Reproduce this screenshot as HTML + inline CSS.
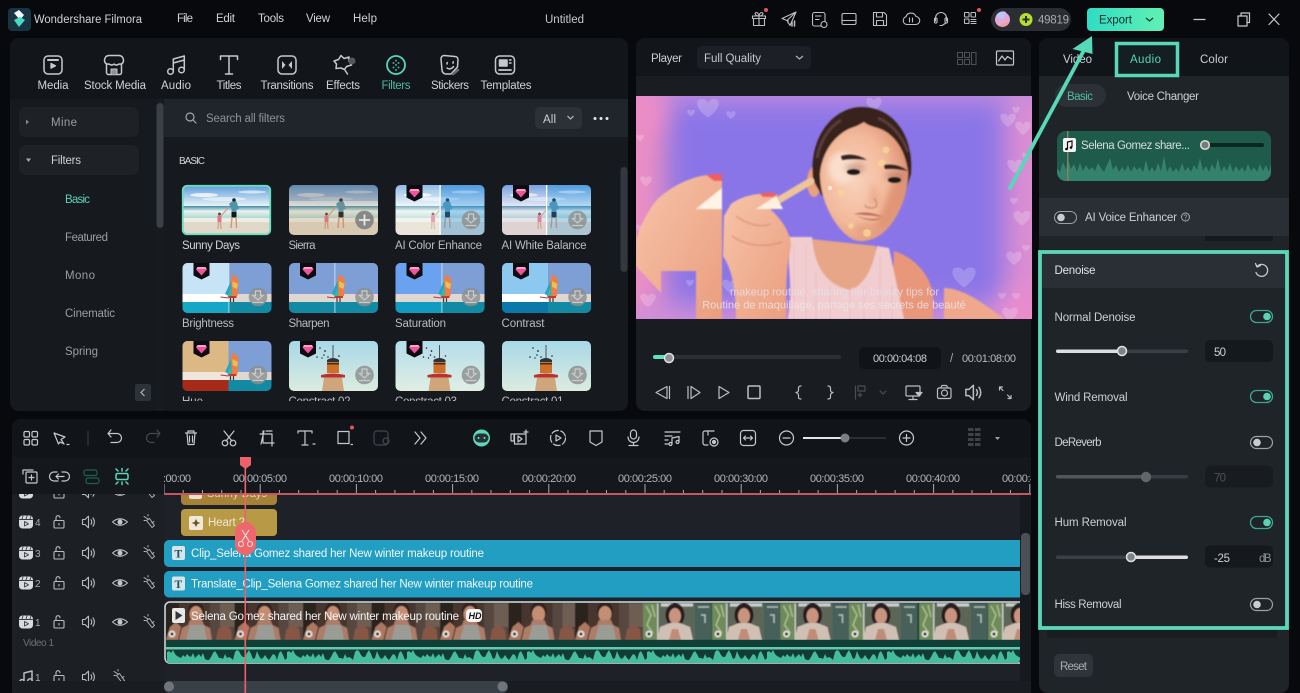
<!DOCTYPE html>
<html lang="en"><head><meta charset="utf-8"><title>Wondershare Filmora</title>
<style>
html,body{margin:0;padding:0;background:#08090c;width:1300px;height:693px;overflow:hidden}
svg{display:block;filter:blur(.3px)}
text{font-family:"Liberation Sans",sans-serif;font-size:11.5px;fill:#d0d3d6}
.ic{fill:none;stroke:#c6c9cc;stroke-width:1.300;stroke-linecap:round;stroke-linejoin:round}
.d{fill:#8d9196}.m{fill:#a9adb1}.l{fill:#cdd0d3}.g{fill:#59d3b4}
</style></head><body>
<svg width="1300" height="693" viewBox="0 0 1300 693" xmlns="http://www.w3.org/2000/svg">
<defs>
<filter id="b1"><feGaussianBlur stdDeviation=".5"/></filter>
<filter id="b07" x="-5%" y="-5%" width="110%" height="110%"><feGaussianBlur stdDeviation=".8"/></filter>
<filter id="b3" x="-30%" y="-30%" width="160%" height="160%"><feGaussianBlur stdDeviation="3"/></filter>
<filter id="b14" x="-100%" y="-100%" width="300%" height="300%"><feGaussianBlur stdDeviation="13"/></filter>
<linearGradient id="exp" x1="0" x2="1" y1="0" y2="0"><stop offset="0" stop-color="#2fdcc4"/><stop offset="1" stop-color="#62f0b4"/></linearGradient>
<linearGradient id="sky" x1="0" x2="0" y1="0" y2="1"><stop offset="0" stop-color="#5c9cdc"/><stop offset="1" stop-color="#e8f2f6"/></linearGradient>
<linearGradient id="sea" x1="0" x2="0" y1="0" y2="1"><stop offset="0" stop-color="#3f8ba5"/><stop offset=".4" stop-color="#e8f3f0"/><stop offset="1" stop-color="#a6d4cc"/></linearGradient>
<linearGradient id="sky2" x1="0" x2="0" y1="0" y2="1"><stop offset="0" stop-color="#a8d8e8"/><stop offset="1" stop-color="#dcecdf"/></linearGradient>
<radialGradient id="face" cx=".4" cy=".48" r=".62"><stop offset="0" stop-color="#f8d2bc"/><stop offset=".6" stop-color="#f3b99b"/><stop offset="1" stop-color="#dc8f70"/></radialGradient>
<linearGradient id="skin" x1="0" x2="1" y1="0" y2="1"><stop offset="0" stop-color="#f7c4a8"/><stop offset="1" stop-color="#ea9d7e"/></linearGradient>
<clipPath id="tc"><rect width="89" height="50" rx="5"/></clipPath>
<clipPath id="vc"><rect width="396" height="223"/></clipPath>
<clipPath id="fc"><rect width="68.5" height="37"/></clipPath>
<clipPath id="lpc"><rect x="10" y="38" width="618" height="373" rx="9"/></clipPath>
<clipPath id="gridc"><rect x="164" y="137" width="456" height="264"/></clipPath>
<clipPath id="tlc"><rect x="164" y="495" width="856" height="198"/></clipPath>
<clipPath id="lhc"><rect x="12" y="494" width="152" height="187"/></clipPath>
<clipPath id="rulc"><rect x="164" y="457" width="867" height="38.5"/></clipPath>
<clipPath id="clipm"><rect x="166" y="603" width="854" height="60" rx="4"/></clipPath>
<clipPath id="apw"><rect x="1057" y="131" width="214" height="50" rx="9"/></clipPath>

<path id="heart" d="M0 3.5C-5 0-4.500-3.200-2.200-3.200-1-3.200-.3-2.400 0-1.800.3-2.400 1-3.200 2.200-3.200 4.500-3.200 5 0 0 3.500Z" fill="#fff" opacity=".2"/>

<g id="tspk"><path d="M-6.500-2.500H-4L-.5-5.800V5.800L-4 2.500H-6.500Z"/><path d="M2-2.300Q3.500 0 2 2.300M4-4.200Q6.800 0 4 4.200"/></g>
<g id="tlock"><rect x="-5" y="-1.500" width="10" height="7.500" rx="1"/><path d="M-3-1.500V-4.300A2 2 0 0 1 1-4.300M0 1.500V3"/></g>
<g id="teye"><path d="M-7.500 0Q0-6.500 7.500 0 0 6.500-7.500 0Z"/><circle r="2.500" fill="#c6c9cc" stroke="none"/></g>
<g id="tmute"><path d="M-6-5.500-2-3M-3.500-1.500 2 5.500 4.500 3.500-.5-3.500ZM-6-1.500H-4.500M-2-7.500V-6M2 1 4 -.5" stroke-width=".9"/></g>
<g id="tfilm"><rect x="-7" y="-6.500" width="14" height="13" rx="3.500" fill="#d8dbdd" stroke="none"/><path d="M-6.500-2.500H6.500M-3-6-4-3M1-6 0-3M5-6 4-3M-1.500-.5V4L2.500 1.800Z" stroke="#3a3e42" stroke-width=".9" fill="none"/></g>
<g id="dl"><circle r="9.300" fill="#8b8f8f" opacity=".82"/><path d="M-2.500-6H2.500V-1.500H5L0 3-5-1.500H-2.500ZM-5.500 5.500H5.500" fill="none" stroke="#c9cccc" stroke-width="1.200"/></g>
<g id="gem"><path d="M11 0H27V12.500L19 16.500 11 12.500Z" fill="#0c0c10"/><path d="M15 4H23L24.500 6.500 19 12.500 13.500 6.500Z" fill="#f0549c"/><path d="M15 4H23L24 6H14Z" fill="#f9a1c9"/></g>

<g id="beach"><rect width="89" height="21" fill="url(#sky)"/><ellipse cx="22" cy="10" rx="14" ry="2" fill="#fff" opacity=".75"/><ellipse cx="70" cy="7" rx="14" ry="1.500" fill="#fff" opacity=".6"/><ellipse cx="42" cy="14" rx="22" ry="2" fill="#fff" opacity=".5"/><rect y="21" width="89" height="13" fill="url(#sea)"/><rect y="33" width="89" height="17" fill="#e0d9c9"/><rect y="33" width="89" height="4" fill="#eef3ec" opacity=".8"/>
<circle cx="52" cy="15" r="1.800" fill="#20201f"/><path d="M47 19 50 16.500H54.500L57 24 54.500 24.500V28H49.500V24Z" fill="#4f93ad"/><path d="M49.500 27H54.500V32.500H49.500Z" fill="#14171a"/><path d="M50 32 49 43M54 32 54.500 43" stroke="#d39a7a" stroke-width="1.500"/><circle cx="37.500" cy="29" r="1.400" fill="#5a3a2a"/><path d="M35.500 30.500H39.500V37H35.500Z" fill="#e0748c"/><path d="M36.500 37 36 44M38.500 37 39 44" stroke="#d39a7a" stroke-width="1.200"/><path d="M39 31 47 22" stroke="#d39a7a" stroke-width="1"/></g>

<g id="sailb"><path d="M50 11 56 16 55 33H45Z" fill="#ec7f44"/><path d="M42.500 31 48.500 18 49.500 34Z" fill="#25a7c2"/><path d="M50 18 55.500 21 54.500 26 50 24Z" fill="#e8c056"/><path d="M48 25 50 34H45Z" fill="#3cb6a8"/><path d="M46 33H54V35H46Z" fill="#c23a33"/><path d="M48 35V39M51 35V39" stroke="#5c2f25" stroke-width="1.200"/><path d="M38 34 46 35" stroke="#b7343a"/></g>
<g id="sail"><rect width="89" height="31" fill="#7e9fd6"/><rect y="31" width="89" height="8" fill="#e0d8d0"/><rect y="39" width="89" height="11" fill="#138aa4"/></g>

<g id="tower"><rect width="89" height="50" fill="url(#sky2)"/></g>
<g id="towerb"><path d="M43.500 4V17H44.500V4Z" fill="#48555a"/><path d="M38 19Q44 15 50 19V22H38Z" fill="#2f3338"/><rect x="38" y="21" width="12" height="11" fill="#cf6f28"/><rect x="38" y="22" width="12" height="1.500" fill="#333"/><path d="M32 34Q44 31 56 34V36.500H32Z" fill="#b8322f"/><path d="M35 36.500H53L55 50H33Z" fill="#cfa67c"/><g fill="#1d2528"><circle cx="31" cy="7" r=".8"/><circle cx="35" cy="14" r=".8"/><circle cx="28" cy="16" r=".8"/><circle cx="36" cy="10" r=".9"/><circle cx="39" cy="16" r=".8"/><circle cx="50" cy="15" r=".8"/><circle cx="33" cy="17" r=".7"/></g></g>

<g id="wave"><path d="M0 14V3L2 2 4 4 6 1 8 5 10 7 12 8 14 9 16 6 18 8 20 5 22 7 24 8 26 4 28 9 30 7 32 5 34 8 36 4 38 10 40 11H42L44 8 46 4 48 2 50 5 52 9H54L56 10 58 5 60 9 62 8 64 9 66 11 68 3 70 1 72 2 74 6 76 8H78L80 4 82 1 84 5 86 10 88 9 90 2 92 7 94 10 96 9 98 6 100 9 102 11 104 8 106 5 108 6 110 11 112 4 114 2 116 6 118 11 120 9V14Z" fill="#44bd9b"/></g>

<g id="f1"><g clip-path="url(#fc)"><rect width="68.500" height="37" fill="#46342e"/><rect width="13" height="37" fill="#2a211f"/><rect x="44" width="24.500" height="37" fill="#574640"/><rect x="54" width="14.500" height="24" fill="#6d5d52"/><ellipse cx="30" cy="8" rx="8" ry="9" fill="#32201b"/><ellipse cx="30" cy="11" rx="6.500" ry="8" fill="#c48e74"/><path d="M24 17H36L38 22 44 25 46 37H13L16 25 22 22Z" fill="#ac7d68"/><path d="M24 22H38L41 37H20Z" fill="#9c9c96"/><path d="M0 37 4 24 10 19 15 24 12 37Z" fill="#ad7862"/><path d="M50 37 52 26 58 22 65 26 66 37Z" fill="#875644"/><circle cx="6" cy="31" r="3.500" fill="#e9e9e6" opacity=".9"/><circle cx="6" cy="31" r="1.500" fill="#222"/></g></g>
<g id="f2"><g clip-path="url(#fc)"><rect width="68.500" height="37" fill="#5c6658"/><rect width="14" height="37" fill="#6f8a5c"/><path d="M3 3 8 12 4 22 10 30M9 2 12 14" stroke="#a8c08c" stroke-width="1.500" fill="none"/><rect x="14" width="1.500" height="37" fill="#c4c9c2"/><rect x="52" width="16.500" height="37" fill="#46605a"/><path d="M55 4H66M58 12H62V20" stroke="#aebeb6" stroke-width="1.500" fill="none"/><rect x="18" width="32" height="3.500" fill="#c8ccc8"/><ellipse cx="32" cy="12" rx="9.500" ry="12" fill="#2b1c1a"/><ellipse cx="32" cy="13" rx="6" ry="8" fill="#c89480"/><path d="M14 37 17 24 27 20H37L47 24 50 37Z" fill="#d0c0b4"/><path d="M26 37 29 26H35L38 37Z" fill="#c08c78"/><circle cx="6" cy="31" r="3.500" fill="#e9e9e6" opacity=".9"/><circle cx="6" cy="31" r="1.500" fill="#222"/></g></g>
</defs>

<rect width="1300" height="693" fill="#08090c"/>

<!-- TITLE BAR -->
<rect x="8" y="8" width="23" height="23" rx="4" fill="#183443"/>
<path d="M14 13 19 10 24 15 20 20Z" fill="#f4f7f7"/><path d="M14 20 20 17 25 20 19 27Z" fill="#43dcc0"/>
<text x="34" y="23" textLength="108" lengthAdjust="spacingAndGlyphs">Wondershare Filmora</text>
<text x="177" y="22" textLength="16">File</text><text x="216" y="22" textLength="19">Edit</text><text x="258" y="22" textLength="26">Tools</text><text x="306" y="22" textLength="24">View</text><text x="353" y="22" textLength="24">Help</text>
<text x="545" y="23" textLength="39" style="fill:#c6c9cc">Untitled</text>

<g class="ic" style="stroke-width:1.100;stroke:#bcbfc2">
<g transform="translate(759,19)"><path d="M-6.500-3H6.500V-.5H-6.500ZM-5.500-.5V6.500H5.500V-.5M0-3V6.500M0-3C-4-3-5-6.500-2.500-6.500-1-6.500 0-4 0-3 0-4 1-6.500 2.500-6.500 5-6.500 4-3 0-3Z"/></g>
<g transform="translate(789,19)"><path d="M7-7-7-.500-2 1.500 1 6.500ZM-2 1.500 7-7M-1 4V1.500"/><path d="M3 3V7M5.500 2V7" stroke-width="1.500"/></g>
<g transform="translate(819,19)"><rect x="-6.500" y="-6.500" width="12.500" height="13.500" rx="2"/><path d="M-3.500-3H2M-3.500.5H0"/><circle cx="5" cy="5.500" r="3" fill="#08090c"/></g>
<g transform="translate(849,19)"><rect x="-7" y="-5.500" width="14" height="11" rx="1.500"/><path d="M-7 1.500H7"/></g>
<g transform="translate(880,19)"><path d="M-6.500-6.500H4L6.500-4V6.500H-6.500ZM-3.500-6.500V-2H2.500V-6.500M-3.500 6.500V1.500H3.500V6.500"/></g>
<g transform="translate(911,19)"><path d="M-4 5.500A4 4 0 0 1-5-2.300 5.300 5.300 0 0 1 5-2.500 4 4 0 0 1 4.500 5.500ZM-1.500-1V3M1.500-1V3"/></g>
<g transform="translate(941,19)"><path d="M-5.500 2V-1A5.500 5.500 0 0 1 5.500-1V2"/><rect x="-6.500" y="-1" width="2.500" height="5" rx="1"/><rect x="4" y="-1" width="2.500" height="5" rx="1"/><path d="M5 4 1 6.500H-1"/></g>
<g transform="translate(970,19)"><rect x="-5.500" y="-6.500" width="4.500" height="4.500" rx=".5"/><rect x="1" y="-6.500" width="4.500" height="4.500" rx=".5"/><rect x="-5.500" y="0" width="4.500" height="4.500" rx=".5"/><path d="M1 .5H6M1 2.500H6M1 4.500H6"/></g>
</g>
<circle cx="766" cy="10" r="2" fill="#e2555d"/><circle cx="979" cy="10" r="2" fill="#e2555d"/>

<rect x="991" y="8" width="80" height="23" rx="11.500" fill="#2a2e33"/>
<circle cx="1002.500" cy="19.500" r="7.500" fill="#e8a6d8"/><path d="M996 16a7.500 7.500 0 0 1 10-4l-3 8z" fill="#b9c6f6"/><path d="M999 25.500a7.500 7.500 0 0 0 10-4z" fill="#f2a082"/>
<circle cx="1026" cy="19.500" r="6.500" fill="#b9dc32"/><path d="M1026 16V23M1022.500 19.500H1029.500" stroke="#263314" stroke-width="2"/>
<text x="1038" y="23.500" textLength="31" class="m">49819</text>

<rect x="1087" y="8" width="77" height="23" rx="4" fill="url(#exp)"/>
<text x="1099" y="23.500" textLength="33" style="fill:#0f2a2a">Export</text>
<path d="M1146 18 1149.500 21 1153 18" fill="none" stroke="#103030" stroke-width="1.200"/>
<g class="ic" style="stroke-width:1.200"><path d="M1194 19.500H1205"/><rect x="1238" y="16" width="9" height="10"/><path d="M1241 16V13H1249.500V22.500H1247"/><path d="M1269 14 1279 24.500M1279 14 1269 24.500"/></g>

<!-- LEFT PANEL -->
<g clip-path="url(#lpc)">
<rect x="10" y="38" width="618" height="373" fill="#16191e"/>
<rect x="10" y="38" width="618" height="61" fill="#12161a"/>
<rect x="164" y="99" width="464" height="38" fill="#20252c"/>
<rect x="156" y="99" width="8" height="312" fill="#181b20"/>
<rect x="156.500" y="103" width="7" height="125" rx="3.500" fill="#3b4046"/>
<rect x="620.500" y="167" width="7" height="105" rx="3.500" fill="#33383e"/>
</g>

<g class="ic">
<g transform="translate(53,65)"><rect x="-9" y="-9" width="18" height="18" rx="4" stroke-width="1.500"/><path d="M-5-5H5" stroke-width="2"/><path d="M-2-1.500 2.500.8-2 3.200Z" fill="#c6c9cc"/></g>
<g transform="translate(114,65)" stroke-width="1.500"><path d="M-5-9.500H5C8-9.500 9.500-7 9.500-4.500 9.500-1.500 7-.5 5-1 3 .5 1.500 .5 0-1-1.500 .5-3 .5-5-1-7-.5-9.500-1.500-9.500-4.500-9.500-7-8-9.500-5-9.500ZM-7.500-1V7.500A2 2 0 0 0-5.500 9.500H5.500A2 2 0 0 0 7.500 7.500V-1"/><path d="M-3 9.500V4H3V9.500" fill="#8e9296" stroke-width="1"/></g>
<g transform="translate(176,65)" stroke-width="1.500"><circle cx="-5.500" cy="6.500" r="2.800"/><circle cx="5.500" cy="5" r="2.800"/><path d="M-2.700 6.500V-6L8.300-9V5M-2.700-2 8.300-5"/></g>
<g transform="translate(229,65)" stroke-width="1.500"><path d="M-8.500-5.500V-9H8.500V-5.500M0-9V9M-3.500 9H3.500"/></g>
<g transform="translate(287,65)"><rect x="-9" y="-9" width="18" height="18" rx="4" stroke-width="1.500"/><path d="M-5-4-1.500 0-5 4ZM5-4 1.500 0 5 4Z" fill="#c6c9cc" stroke="none"/></g>
<g transform="translate(343,65)" stroke-width="1.500"><path d="M-2-9.500 1-6.500 6-8 6-3.500 8.500 0 3.500 1.500 1.500 4.500-2 3-7 3.500-6.500-1-9-4-4.500-5.500ZM1.500 4.500 4.500 9"/><circle cx="9" cy="-4" r="3.500" fill="#53575b" stroke="none"/></g>
<g transform="translate(396,65)" style="stroke:#58d6b6"><circle r="9" stroke-width="1.800" fill="none"/><g fill="#4ca892" stroke="none"><circle cy="-4.500" r="1"/><circle cx="-2.500" cy="-2" r="1"/><circle cx="2.500" cy="-2" r="1"/><circle r="1"/><circle cx="-2.500" cy="2.500" r="1"/><circle cx="2.500" cy="2.500" r="1"/><circle cy="5" r="1"/></g></g>
<g transform="translate(450,65)" stroke-width="1.500"><path d="M-6-9.500 5-8.500A3 3 0 0 1 8-5.500L7.500 2 1 9H-4A4 4 0 0 1-8 5L-9-6A3.200 3.200 0 0 1-6-9.500Z"/><path d="M-3-1-2.800-2.500M3-1.800 3.200-3.300M-3 3C-1.500 4.500 2 4 3.500 1.500"/><path d="M3 9 8 5" stroke="#6a6e72" stroke-width="2.500"/></g>
<g transform="translate(505,65)" stroke-width="1.500"><rect x="-9.500" y="-9" width="19" height="18" rx="4"/><path d="M-5.500-5H2V1H-5.500ZM4.500-5H6M4.500-2H6" fill="#c6c9cc"/><path d="M-6 5H6" stroke-width="1.800"/></g>
</g>
<text x="53" y="89" text-anchor="middle" textLength="31">Media</text>
<text x="115" y="89" text-anchor="middle" textLength="62">Stock Media</text>
<text x="176" y="89" text-anchor="middle" textLength="30">Audio</text>
<text x="229" y="89" text-anchor="middle" textLength="25">Titles</text>
<text x="287" y="89" text-anchor="middle" textLength="53">Transitions</text>
<text x="343" y="89" text-anchor="middle" textLength="34">Effects</text>
<text x="396" y="89" text-anchor="middle" textLength="29" style="fill:#58d6b6;opacity:.85">Filters</text>
<text x="450" y="89" text-anchor="middle" textLength="38">Stickers</text>
<text x="506" y="89" text-anchor="middle" textLength="51">Templates</text>

<!-- sidebar -->
<rect x="19" y="107" width="120" height="30" rx="7" fill="#1e2126"/>
<rect x="19" y="145" width="120" height="30" rx="7" fill="#1e2126"/>
<path d="M26 119.500 29 122 26 124.500Z" fill="#85898d"/><path d="M26 158.500H31L28.500 162Z" fill="#a5a9ad"/>
<text x="51" y="126" textLength="26" style="fill:#9a9ea2">Mine</text>
<text x="51" y="164" textLength="30" class="l">Filters</text>
<text x="65" y="203" textLength="25" style="fill:#5bd1b2">Basic</text>
<text x="65" y="241" textLength="43" style="fill:#9a9ea2">Featured</text><text x="65" y="279" textLength="30" style="fill:#9a9ea2">Mono</text><text x="65" y="317" textLength="50" style="fill:#9a9ea2">Cinematic</text><text x="65" y="355" textLength="33" style="fill:#9a9ea2">Spring</text>
<rect x="135" y="384" width="16" height="17" rx="2" fill="#2d3238"/><path d="M144.500 389 141 392.500 144.500 396" fill="none" stroke="#b0b4b8" stroke-width="1.200"/>

<!-- search -->
<g class="ic" style="stroke:#a3a7ab;stroke-width:1.200"><circle cx="190" cy="117" r="4"/><path d="M193 120 196 123"/></g>
<text x="206" y="122" textLength="79" style="fill:#8d9196">Search all filters</text>
<rect x="535" y="107" width="47" height="22" rx="5" fill="#2c3137"/>
<text x="543" y="123" textLength="13" class="l">All</text>
<path d="M567.500 116 570.500 119 573.500 116" fill="none" stroke="#c2c5c8" stroke-width="1.100"/>
<g fill="#e3e5e7"><circle cx="595" cy="118.500" r="1.500"/><circle cx="601" cy="118.500" r="1.500"/><circle cx="607" cy="118.500" r="1.500"/></g>
<text x="179" y="164" textLength="26" style="font-size:10px;fill:#d4d7d9">BASIC</text>

<!-- thumbs -->
<g clip-path="url(#gridc)">
<g transform="translate(182,185)"><g clip-path="url(#tc)"><use href="#beach"/></g><rect x=".75" y=".75" width="87.500" height="48.500" rx="4.500" fill="none" stroke="#66e0bf" stroke-width="1.800"/></g>
<g transform="translate(289,185)"><g clip-path="url(#tc)"><use href="#beach"/><rect width="89" height="50" fill="#b98a5c" opacity=".2"/><rect width="89" height="16" fill="#405a80" opacity=".25"/></g><circle cx="75.500" cy="35" r="9.300" fill="#7b7f7d" opacity=".88"/><path d="M70 35H81M75.500 29.500V40.500" stroke="#e8eaea" stroke-width="1.800"/></g>
<g transform="translate(395.500,185)"><g clip-path="url(#tc)"><use href="#beach"/><rect width="44" height="50" fill="#fff" opacity=".32"/><rect x="44" width="45" height="50" fill="#3d9be8" opacity=".38"/><rect x="44" width="1.300" height="50" fill="#fff"/></g><use href="#gem" x="0"/><use href="#dl" x="75.500" y="35"/></g>
<g transform="translate(502,185)"><g clip-path="url(#tc)"><use href="#beach"/><rect width="44" height="50" fill="#d8c0f0" opacity=".22"/><rect x="44" width="45" height="50" fill="#3d9be8" opacity=".3"/><rect x="44" width="1.300" height="50" fill="#fff"/></g><use href="#gem"/><use href="#dl" x="75.500" y="35"/></g>

<g transform="translate(182.500,263)"><g clip-path="url(#tc)"><use href="#sail"/><rect width="46" height="31" fill="#c6e4f6"/><rect y="31" width="46" height="8" fill="#fff"/><rect y="39" width="46" height="11" fill="#16a7c4"/><rect x="46" width=".8" height="50" fill="#cfe6f2"/><use href="#sailb"/></g><use href="#gem"/><use href="#dl" x="75.500" y="34"/></g>
<g transform="translate(289,263)"><g clip-path="url(#tc)"><use href="#sail"/><rect x="45.500" width=".8" height="50" fill="#d6eaf6"/><use href="#sailb"/></g><use href="#gem"/><use href="#dl" x="75.500" y="34"/></g>
<g transform="translate(395.500,263)"><g clip-path="url(#tc)"><use href="#sail"/><rect width="46" height="31" fill="#6aa2f0"/><rect y="39" width="46" height="11" fill="#0f9cc0"/><rect x="46" width=".8" height="50" fill="#cfe6f2"/><use href="#sailb"/></g><use href="#gem"/><use href="#dl" x="75.500" y="34"/></g>
<g transform="translate(502,263)"><g clip-path="url(#tc)"><use href="#sail"/><rect width="46" height="31" fill="#8cc8f0"/><rect y="31" width="46" height="8" fill="#fff"/><rect y="39" width="46" height="11" fill="#0a78a8"/><use href="#sailb"/></g><use href="#gem"/><use href="#dl" x="75.500" y="34"/></g>

<g transform="translate(182.500,341)"><g clip-path="url(#tc)"><use href="#sail"/><rect width="46" height="31" fill="#dcb984"/><rect y="31" width="46" height="8" fill="#eee5dc"/><rect y="39" width="46" height="11" fill="#a52a18"/><use href="#sailb"/></g><use href="#gem"/><use href="#dl" x="75.500" y="34"/></g>
<g transform="translate(289,341)"><g clip-path="url(#tc)"><use href="#tower"/><use href="#towerb"/></g><use href="#gem"/><use href="#dl" x="75.500" y="34"/></g>
<g transform="translate(395.500,341)"><g clip-path="url(#tc)"><use href="#tower"/><rect width="89" height="50" fill="#fff" opacity=".14"/><use href="#towerb"/></g><use href="#gem"/><use href="#dl" x="75.500" y="34"/></g>
<g transform="translate(502,341)"><g clip-path="url(#tc)"><use href="#tower"/><use href="#towerb"/></g><use href="#dl" x="75.500" y="34"/></g>

<text x="182" y="249" textLength="58">Sunny Days</text><text x="288.500" y="249" textLength="27" style="fill:#b9bcc0">Sierra</text><text x="395" y="249" textLength="87" style="fill:#b9bcc0">AI Color Enhance</text><text x="501.500" y="249" textLength="85" style="fill:#b9bcc0">AI White Balance</text>
<text x="182" y="327" textLength="52" style="fill:#b9bcc0">Brightness</text><text x="288.500" y="327" textLength="41" style="fill:#b9bcc0">Sharpen</text><text x="395" y="327" textLength="51" style="fill:#b9bcc0">Saturation</text><text x="501.500" y="327" textLength="43" style="fill:#b9bcc0">Contrast</text>
<text x="182" y="405" textLength="21" style="fill:#b9bcc0">Hue</text><text x="288.500" y="405" textLength="62" style="fill:#b9bcc0">Constract 02</text><text x="395" y="405" textLength="62" style="fill:#b9bcc0">Constract 03</text><text x="501.500" y="405" textLength="62" style="fill:#b9bcc0">Constract 01</text>
</g>

<!-- PLAYER -->
<rect x="636" y="38" width="395" height="373" rx="9" fill="#191c21"/>
<path d="M636 76V47a9 9 0 0 1 9-9H1022a9 9 0 0 1 9 9V76Z" fill="#12161b"/>
<text x="651" y="62" textLength="31" class="l">Player</text>
<rect x="697" y="46" width="114" height="23" rx="5" fill="#1c2026"/>
<text x="704" y="62" textLength="57" style="fill:#c4c7ca">Full Quality</text>
<path d="M796 56 799.500 59 803 56" fill="none" stroke="#b0b4b8" stroke-width="1.200"/>
<g fill="none" stroke="#4e5256" stroke-width="1"><rect x="957.500" y="52.500" width="5" height="5"/><rect x="964.500" y="52.500" width="5" height="5"/><rect x="957.500" y="59.500" width="5" height="5"/><rect x="964.500" y="59.500" width="5" height="5"/><path d="M971.500 52.500H976V64.500H971.500Z"/></g>
<g class="ic" style="stroke-width:1.200"><rect x="996.500" y="51" width="17" height="14" rx="1"/><path d="M998.500 61 1002 56 1005 60 1007.500 56.500 1011.500 59"/></g>

<!-- VIDEO -->
<g transform="translate(636,96)" clip-path="url(#vc)">
<rect width="396" height="223" fill="#8a75e8"/>
<rect x="-40" y="-20" width="70" height="263" fill="#ea8ec4" filter="url(#b14)"/>
<rect x="368" y="-20" width="60" height="263" fill="#dc8ed2" filter="url(#b14)"/>
<rect x="-20" y="-30" width="436" height="36" fill="#c48cdc" filter="url(#b14)"/>
<rect x="-20" y="208" width="436" height="40" fill="#cf8ed8" filter="url(#b14)"/>
<circle cx="0" cy="10" r="28" fill="#ee8cc6" filter="url(#b14)"/><circle cx="396" cy="223" r="34" fill="#eb8ccc" filter="url(#b14)"/>
<use href="#heart" transform="translate(72,12) scale(2.800)"/><use href="#heart" x="55" y="17"/><use href="#heart" transform="translate(95,19) scale(1.200)"/><use href="#heart" x="4" y="42"/><use href="#heart" transform="translate(10,85) scale(1.500)"/><use href="#heart" x="4" y="132"/><use href="#heart" transform="translate(238,8) scale(2)"/><use href="#heart" x="380" y="14"/><use href="#heart" transform="translate(372,24) scale(2)"/><use href="#heart" transform="translate(387,32) scale(2)"/><use href="#heart" transform="translate(379,70) scale(2)"/><use href="#heart" x="390" y="60"/><use href="#heart" x="378" y="105"/><use href="#heart" transform="translate(386,122) scale(2.200)"/><use href="#heart" x="390" y="152"/><use href="#heart" transform="translate(378,162) scale(2)"/><use href="#heart" transform="translate(328,181) scale(3)"/><use href="#heart" x="380" y="200"/><use href="#heart" x="366" y="200"/><use href="#heart" transform="translate(374,218) scale(2)"/><use href="#heart" transform="translate(12,204) scale(2)"/><use href="#heart" x="54" y="187"/><use href="#heart" transform="translate(94,190) scale(2)"/>
<g filter="url(#b07)">
<!-- left hand block -->
<path d="M0 145C5 125 18 105 25 100 40 88 58 78 86 78V223H60V175H25V197L0 170Z" fill="url(#skin)"/>
<path d="M70 79C78 78 82 78 86 78V85H78Z" fill="#ef5f5f"/><path d="M60 113 86 92V113Z" fill="#fff3e6"/>
<!-- body -->
<path d="M258 155C280 162 294 180 297 198V223H255Z" fill="#e9977a"/>
<path d="M175 143 240 150V200L175 200Z" fill="#e8a688"/>
<path d="M153 141 176 141C178 165 186 188 214 194 232 188 238 165 241 150L253 152 268 223H152C158 190 150 165 153 141Z" fill="#f1cdd0"/>
<path d="M158 150V223M170 150V223M180 176V223M194 190V223M214 196V223M228 190V223M244 160V223M256 190V223" stroke="#dfa4b0" stroke-width="1" opacity=".4"/>
<path d="M308 223V192C325 192 345 205 368 223Z" fill="#f0a88c"/>
<!-- hair+face -->
<ellipse cx="178" cy="86" rx="7" ry="15" fill="#e9a07e"/>
<path d="M177 84C172 40 198 11 226 11 256 11 278 38 275 78L268 100H186Z" fill="#38211f"/>
<path d="M205 24C192 32 184 46 181 62M242 22C256 28 266 40 272 56" stroke="#6a4744" stroke-width="3" fill="none" opacity=".7"/>
<path d="M184 78C186 55 200 38 215 32 222 30 226 27 228 26 232 30 240 31 247 34 262 42 270 58 272 76 272 100 262 122 250 134 240 144 226 148 216 143 198 132 184 104 184 78Z" fill="url(#face)"/>
</g>
<g filter="url(#b3)"><ellipse cx="206" cy="72" rx="14" ry="16" fill="#fbe3d2" opacity=".85"/><path d="M255 90 270 72 268 100 250 132 240 130Z" fill="#d98a6a" opacity=".6"/><ellipse cx="219" cy="72" rx="10" ry="5" fill="#b57a68" opacity=".55"/><ellipse cx="259" cy="80" rx="10" ry="5" fill="#b57a68" opacity=".55"/><path d="M236 86 246 104 232 110Z" fill="#e8a080" opacity=".55"/><ellipse cx="232" cy="133" rx="14" ry="6" fill="#e29878" opacity=".5"/></g>
<g filter="url(#b07)">
<path d="M205 60Q218 56 231 64 218 62 206 64ZM248 69Q262 67 272 75 260 72 249 73Z" fill="#332221"/>
<ellipse cx="217.500" cy="76" rx="6.500" ry="2.800" fill="#1f1414"/><ellipse cx="258.500" cy="84" rx="6.500" ry="2.800" fill="#1f1414"/>
<path d="M238 102Q245 112 235 112 230 112 229 109" fill="none" stroke="#cf8f72" stroke-width="1.500"/>
<path d="M218 118Q232 114 247 121 232 119 218 118ZM219 119Q235 128 246 122 232 125 219 119Z" fill="#bd6a5c"/>
<!-- brush + hand -->
<path d="M143 104 175 85" stroke="#edc59a" stroke-width="7" stroke-linecap="round"/>
<path d="M88 120 95 108C105 100 125 95 142 99L134 113C148 125 155 140 155 150 150 170 150 195 150 223H100C100 190 95 172 87 160Z" fill="url(#skin)"/>
<path d="M124 98Q132 95 141 98L139 101H127Z" fill="#ef5f5f"/><path d="M120 113 140 100 147 113Z" fill="#fff0e0"/>
<path d="M100 120C110 128 124 132 134 128M96 140C110 150 128 152 146 146" stroke="#d98a70" stroke-width="1.500" fill="none" opacity=".7"/>
</g>
<g fill="#f8d595" opacity=".85" filter="url(#b1)"><circle cx="250" cy="54" r="3.500"/><circle cx="245.500" cy="67" r="3.500"/><circle cx="205.500" cy="97" r="3.500"/><circle cx="231" cy="137" r="4"/><circle cx="215" cy="130" r="2.700"/></g><circle cx="194" cy="92" r="2" fill="#fff" opacity=".7"/>
<text x="198.500" y="199.500" text-anchor="middle" style="font-size:11px;fill:#e9dfe6;opacity:.85">makeup routine, sharing her beauty tips for</text>
<text x="198" y="212.500" text-anchor="middle" style="font-size:11px;fill:#efe5e6;opacity:.85">Routine de maquillage, partage ses secrets de beauté</text>
</g>

<!-- player controls -->
<rect x="669" y="355" width="172" height="4" rx="2" fill="#2c3035"/>
<rect x="653" y="355" width="16" height="4" rx="2" fill="#5fe0bf"/>
<circle cx="669" cy="358" r="4.500" fill="#8e9296" stroke="#dfe1e3" stroke-width="1.500"/>
<rect x="859" y="347" width="82" height="22" rx="5" fill="#101317"/>
<text x="873" y="362" textLength="54" style="font-size:11px;fill:#cdd0d3">00:00:04:08</text>
<text x="950" y="362" class="m">/</text>
<text x="962" y="362" textLength="54" style="font-size:11px;fill:#b9bcc0">00:01:08:00</text>
<g class="ic" style="stroke:#bcbfc2;stroke-width:1.200">
<path d="M667 386.500 656 392.500 667 398.500ZM669.500 386.500V398.500"/>
<path d="M688 386.500V398.500M691 386.500 700 392.500 691 398.500Z"/>
<path d="M719 386.500 729 392.500 719 398.500Z"/>
<rect x="748" y="386" width="12" height="12.500" rx="1" stroke-width="1.500"/>
<path d="M801 386C798 386 798.500 388 798.500 390S797.500 392 796 392.500C797.500 393 798.500 393.500 798.500 395.500S798 399 801 399M828 386C831 386 830.500 388 830.500 390S831.500 392 833 392.500C831.500 393 830.500 393.500 830.500 395.500S831 399 828 399"/>
<g style="stroke:#4a4e52"><path d="M855.500 386V399M858 386H865V391H858ZM858 395H862M860 393V397M880 391 883 394 886 391"/></g>
<rect x="906" y="386" width="14" height="10" rx="1"/><path d="M909 399.500H917M913 396V399.500"/><path d="M916 392.500H922L919 396Z" fill="#c4c7ca"/>
<rect x="937.500" y="388" width="13.500" height="10.500" rx="1.500"/><path d="M940.500 388 942 385.500H946.500L948 388"/><circle cx="944.500" cy="393" r="3"/>
<g transform="translate(974,392.500) scale(1.250)"><use href="#tspk"/></g>
<path d="M999.500 387 1003 390.500M999.500 387V390M999.500 387H1002.500M1011 398.500 1007.500 395M1011 398.500V395.500M1011 398.500H1008"/>
</g>

<!-- RIGHT PANEL -->
<rect x="1039" y="38" width="250" height="655" rx="9" fill="#1f2429"/>
<path d="M1039 76V47a9 9 0 0 1 9-9H1280a9 9 0 0 1 9 9V76Z" fill="#11151a"/>
<text x="1063" y="63" textLength="29" class="l">Video</text>
<rect x="1117" y="44" width="60" height="31" fill="#131f22"/>
<text x="1130" y="63" textLength="31" class="g">Audio</text>
<text x="1200" y="63" textLength="28" class="l">Color</text>
<rect x="1055" y="84" width="51" height="23" rx="11.500" fill="#2c3137"/>
<text x="1067" y="100" textLength="26" class="g" style="opacity:.85">Basic</text>
<text x="1127" y="100" textLength="72" class="l">Voice Changer</text>
<rect x="1057" y="131" width="214" height="50" rx="9" fill="#1e5b4b"/>
<g clip-path="url(#apw)"><path d="M1057 181V168L1060 172 1063 162 1066 170 1068 160 1071 169 1074 164 1077 172 1080 163 1083 171 1086 165 1089 170 1092 167 1095 171 1098 163 1101 168 1104 172 1107 165 1110 158 1113 170 1116 165 1119 172 1122 167 1125 171 1128 165 1131 172 1134 166 1137 170 1140 167 1143 172 1146 160 1149 172 1152 167 1155 172 1158 163 1161 171 1164 156 1167 172 1170 166 1173 172 1176 168 1179 172 1182 163 1185 171 1188 167 1191 172 1194 165 1197 170 1200 158 1203 171 1206 166 1209 172 1212 164 1215 170 1218 158 1221 172 1224 166 1227 171 1230 163 1233 172 1236 166 1239 171 1242 167 1245 172 1248 164 1251 171 1254 167 1257 172 1260 164 1263 171 1266 165 1269 172 1271 164V181Z" fill="#34826c"/></g>
<rect x="1067" y="131" width="1.500" height="50" fill="#8b7f62"/>
<rect x="1063" y="138" width="13" height="14" rx="2" fill="#f4f4f4"/><path d="M1067.500 149V142L1072 141V147" fill="none" stroke="#111" stroke-width="1.200"/><circle cx="1066.500" cy="149" r="1.300"/><circle cx="1071" cy="147.500" r="1.300"/>
<text x="1081" y="149" textLength="109" style="fill:#d6dcda">Selena Gomez share...</text>
<rect x="1205" y="143" width="59" height="4" rx="2" fill="#0e2620"/>
<circle cx="1205" cy="145" r="4.300" fill="#777c7b" stroke="#d9dcdb" stroke-width="1.500"/>
<rect x="1039" y="198" width="250" height="38" fill="#2a2f35"/>
<rect x="1054.500" y="211.500" width="22" height="12" rx="6" fill="none" stroke="#9da1a5"/>
<circle cx="1061" cy="217.500" r="3.800" fill="#c9ccd0"/>
<text x="1085" y="221" textLength="92" class="l">AI Voice Enhancer</text>
<circle cx="1185.500" cy="217" r="4" fill="none" stroke="#a9adb1"/>
<text x="1183.500" y="219.500" style="font-size:7px;fill:#a9adb1">?</text>
<rect x="1205" y="236" width="68" height="5" fill="#15181d"/>

<!-- Denoise -->
<rect x="1041" y="253" width="246" height="35" fill="#2a2f35"/>
<text x="1054.500" y="274" textLength="41" style="fill:#e2e4e6">Denoise</text>
<g class="ic" style="stroke-width:1.300"><path d="M1257 266.500A6 6 0 1 1 1256 272.500"/><path d="M1255.500 263.500 1257 267 1260.500 265.500"/></g>
<text x="1054.500" y="321" textLength="81" class="l">Normal Denoise</text>
<text x="1054.500" y="401" textLength="73" class="l">Wind Removal</text>
<text x="1054.500" y="446" textLength="47" class="l">DeReverb</text>
<text x="1054.500" y="526" textLength="72" class="l">Hum Removal</text>
<text x="1054.500" y="608" textLength="67" class="l">Hiss Removal</text>

<g fill="none" stroke="#3ea88d" stroke-width="1.300"><rect x="1250.500" y="310.500" width="22" height="12" rx="6"/><rect x="1250.500" y="390.500" width="22" height="12" rx="6"/><rect x="1250.500" y="516.500" width="22" height="12" rx="6"/></g>
<g class="g"><circle cx="1267" cy="316.500" r="3.800"/><circle cx="1267" cy="396.500" r="3.800"/><circle cx="1267" cy="522.500" r="3.800"/></g>
<g fill="none" stroke="#9da1a5" stroke-width="1.200"><rect x="1250.500" y="436.500" width="22" height="12" rx="6"/><rect x="1250.500" y="598.500" width="22" height="12" rx="6"/></g>
<circle cx="1257" cy="442.500" r="3.800" fill="#c9ccd0"/><circle cx="1257" cy="604.500" r="3.800" fill="#c9ccd0"/>

<rect x="1056" y="349.500" width="132" height="3.500" rx="1.700" fill="#3a3f45"/><rect x="1056" y="349.500" width="66" height="3.500" rx="1.700" fill="#dcdee0"/><circle cx="1122" cy="351" r="4.500" fill="#7f8387" stroke="#e2e4e6" stroke-width="1.500"/>
<rect x="1205" y="340" width="68" height="22" rx="5" fill="#15181d"/><text x="1214" y="356" textLength="12" class="l">50</text>

<rect x="1056" y="475" width="132" height="3.500" rx="1.700" fill="#383c42"/><rect x="1056" y="475" width="90" height="3.500" rx="1.700" fill="#52565b"/><circle cx="1146" cy="477" r="5.200" fill="#62666b"/>
<rect x="1205" y="465.500" width="68" height="22" rx="5" fill="#181b20"/><text x="1214" y="481.500" textLength="12" style="fill:#4f5358">70</text>

<rect x="1056" y="555.500" width="132" height="3.500" rx="1.700" fill="#3a3f45"/><rect x="1131" y="555.500" width="57" height="3.500" rx="1.700" fill="#dcdee0"/><circle cx="1131" cy="557" r="4.500" fill="#7f8387" stroke="#e2e4e6" stroke-width="1.500"/>
<rect x="1205" y="545.500" width="68" height="22" rx="5" fill="#15181d"/><text x="1214" y="562" textLength="16" class="l">-25</text><text x="1259" y="562" textLength="12.500" style="fill:#8d9196">dB</text>

<rect x="1047" y="630" width="230" height="8" fill="#191d22"/>
<rect x="1054" y="654" width="39" height="23" rx="5" fill="#2f343a"/>
<text x="1060" y="670" textLength="27" class="m">Reset</text>

<!-- TIMELINE -->
<rect x="12" y="419" width="1019" height="274" rx="9" fill="#1c2025"/>
<path d="M12 457V428a9 9 0 0 1 9-9H1022a9 9 0 0 1 9 9V457Z" fill="#11151a"/>
<rect x="12" y="457" width="1019" height="37" fill="#14181d"/>
<rect x="164" y="494" width="867" height="187" fill="#1e2228"/>
<rect x="12" y="681" width="1019" height="12" fill="#191c21"/>
<rect x="164" y="681" width="344" height="12" rx="5" fill="#3a4048"/>
<circle cx="169" cy="686.500" r="5" fill="#70757b"/><circle cx="502.500" cy="686.500" r="5" fill="#70757b"/>

<!-- toolbar icons -->
<g class="ic" style="stroke-width:1.200">
<rect x="24" y="431.500" width="5.500" height="5.500" rx="1.300"/><rect x="32" y="431.500" width="5.500" height="5.500" rx="1.300"/><rect x="24" y="439.500" width="5.500" height="5.500" rx="1.300"/><rect x="32" y="439.500" width="5.500" height="5.500" rx="1.300"/>
<path d="M54 433 65 437 61 439.500 64 444 60 442 58.500 444ZM67 444.500H69"/>
<path d="M88 431V445" style="stroke:#35393e"/>
<path d="M111 430 108 433.500 111 437M108 433.500H117A4.500 4.500 0 0 1 117 442.500H111"/>
<path d="M157 430 160 433.500 157 437M160 433.500H151A4.500 4.500 0 0 0 151 442.500H154" style="stroke:#454a4f"/>
<path d="M185.500 433H196.500M188 433V431H194V433M187 433 188 444.500H194L195 433M189.500 436V442M192.500 436V442"/>
<path d="M224 431 232 441M234 431 226 441"/><circle cx="225" cy="443" r="2.800"/><circle cx="233" cy="443" r="2.800"/>
<path d="M263 431V443H274M260 434H272V446M261 444 264 431"/><path d="M266 431H272"/>
<path d="M298 433V431H312V433M305 431V445M302 445H308M313 444H315"/>
<rect x="338" y="431.500" width="11" height="12"/><path d="M351 444.500H352.500"/>
<rect x="374" y="431" width="14" height="14" rx="3" style="stroke:#43484d"/><circle cx="386" cy="441" r="3" style="stroke:#43484d"/>
<path d="M415 432 420 438 415 444M421 432 426 438 421 444"/>
<path d="M511 434H514V441H511ZM514.500 434H526V444H514.500ZM518 436 522 439 518 442Z"/><path d="M526 430V434M524 432H528"/>
<circle cx="558" cy="438" r="7.500" stroke-dasharray="7 2.500"/><path d="M556 435 561 438 556 441Z"/>
<path d="M590 431H602V442L596 445.500 590 442Z"/>
<rect x="630.500" y="430" width="6" height="9" rx="3"/><path d="M628 437A5.500 5.500 0 0 0 639 437M633.500 442.500V445M629 445.500H638"/>
<path d="M665 432H680M665 436H672M665 440H668M665 444H668M672 444V438L679 436.500V442"/><circle cx="670.500" cy="444" r="1.500"/><circle cx="677.500" cy="442" r="1.500"/>
<path d="M714 431H705A2 2 0 0 0 703 433V443A2 2 0 0 0 705 445H708"/><path d="M708 431V435"/><circle cx="714" cy="442" r="4"/><circle cx="714" cy="442" r="1.500" fill="#c6c9cc"/>
<rect x="740.500" y="430.500" width="15" height="15" rx="3"/><path d="M743.500 438H752.500M745.500 436 743.500 438 745.500 440M750.500 436 752.500 438 750.500 440"/>
<circle cx="786.500" cy="438" r="7"/><path d="M783 438H790"/>
<circle cx="906.500" cy="438" r="7"/><path d="M903 438H910M906.500 434.500V441.500"/>
</g>
<circle cx="481.500" cy="438" r="8.500" fill="#5ed9b8"/><rect x="474.500" y="433.500" width="14" height="9" rx="4.500" fill="#263138"/><circle cx="478.500" cy="438" r="1" fill="#6ee0c2"/><circle cx="484.500" cy="438" r="1" fill="#6ee0c2"/>
<circle cx="352" cy="427.500" r="2" fill="#e2555d"/>
<rect x="803" y="437.500" width="83" height="1" fill="#45494e"/><rect x="803" y="437" width="42" height="2" fill="#e2e4e6"/><circle cx="845" cy="438" r="4.500" fill="#7c8085"/>
<g fill="#3f4348"><rect x="968" y="428" width="5.500" height="3"/><rect x="975" y="428" width="5.500" height="3"/><rect x="968" y="433" width="5.500" height="3"/><rect x="975" y="433" width="5.500" height="3"/><rect x="968" y="438" width="5.500" height="3"/><rect x="975" y="438" width="5.500" height="3"/><rect x="968" y="443" width="5.500" height="3"/><rect x="975" y="443" width="5.500" height="3"/></g>
<path d="M995 437H1000L997.500 440Z" fill="#a0a4a8"/>

<!-- ruler header icons -->
<g class="ic" style="stroke-width:1.200">
<path d="M23 474V470H33"/><rect x="26" y="472" width="11" height="11" rx="1"/><path d="M31.500 475V480M29 477.500H34"/>
<path d="M57 472H54A4.500 4.500 0 0 0 54 481H58M62 472H65A4.500 4.500 0 0 1 65 481H62M56 476.500H64M58.500 474 56 476.500 58.500 479"/>
<g style="stroke:#1f5f50"><rect x="84" y="470" width="13" height="5.500" rx="2"/><rect x="86" y="478" width="13" height="5.500" rx="2"/></g>
<g style="stroke:#5fd5b6;stroke-width:1.500"><rect x="116" y="473.500" width="12" height="6" rx="1.500"/><path d="M122 468.500V471M122 482V484.500M116 469 118 471M128 469 126 471M116 484 118 482M128 484 126 482"/></g>
</g>

<!-- ruler -->
<g clip-path="url(#rulc)">
<text x="163" y="482" textLength="28" style="font-size:11px;fill:#b4b7bb">:00:00</text>
<text x="233" y="482" textLength="54" style="font-size:11px;fill:#b4b7bb">00:00:05:00</text>
<text x="329" y="482" textLength="54" style="font-size:11px;fill:#b4b7bb">00:00:10:00</text>
<text x="425" y="482" textLength="54" style="font-size:11px;fill:#b4b7bb">00:00:15:00</text>
<text x="522" y="482" textLength="54" style="font-size:11px;fill:#b4b7bb">00:00:20:00</text>
<text x="618" y="482" textLength="54" style="font-size:11px;fill:#b4b7bb">00:00:25:00</text>
<text x="714" y="482" textLength="54" style="font-size:11px;fill:#b4b7bb">00:00:30:00</text>
<text x="810" y="482" textLength="54" style="font-size:11px;fill:#b4b7bb">00:00:35:00</text>
<text x="906" y="482" textLength="54" style="font-size:11px;fill:#b4b7bb">00:00:40:00</text>
<text x="1002" y="482" textLength="54" style="font-size:11px;fill:#b4b7bb">00:00:45:00</text>
<path d="M164 484V493M260.200 484V493M356.400 484V493M452.600 484V493M548.800 484V493M645 484V493M741.200 484V493M837.400 484V493M933.600 484V493M1029.800 484V493M183.200 490V493M202.500 490V493M221.700 490V493M241 490V493M279.400 490V493M298.700 490V493M317.900 490V493M337.200 490V493M375.600 490V493M394.900 490V493M414.100 490V493M433.400 490V493M471.800 490V493M491 490V493M510.300 490V493M529.600 490V493M568 490V493M587.200 490V493M606.500 490V493M625.800 490V493M664.200 490V493M683.400 490V493M702.700 490V493M722 490V493M760.400 490V493M779.600 490V493M798.900 490V493M818.100 490V493M856.600 490V493M875.800 490V493M895.100 490V493M914.300 490V493M952.800 490V493M972 490V493M991.300 490V493M1010.500 490V493" stroke="#a8abae" stroke-width="1"/>
</g>

<!-- track headers -->
<g clip-path="url(#lhc)">
<g class="ic" style="stroke-width:1.100;stroke:#b9bcc0">
<use href="#tfilm" x="26" y="492"/><use href="#tlock" x="59" y="492"/><use href="#tspk" x="89" y="492"/><use href="#teye" x="120" y="492"/><use href="#tmute" x="150" y="492"/>
<use href="#tfilm" x="26" y="522"/><use href="#tlock" x="59" y="522"/><use href="#tspk" x="89" y="522"/><use href="#teye" x="120" y="522"/><use href="#tmute" x="150" y="522"/>
<use href="#tfilm" x="26" y="553"/><use href="#tlock" x="59" y="553"/><use href="#tspk" x="89" y="553"/><use href="#teye" x="120" y="553"/><use href="#tmute" x="150" y="553"/>
<use href="#tfilm" x="26" y="583"/><use href="#tlock" x="59" y="583"/><use href="#tspk" x="89" y="583"/><use href="#teye" x="120" y="583"/><use href="#tmute" x="150" y="583"/>
<use href="#tfilm" x="26" y="622"/><use href="#tlock" x="59" y="622"/><use href="#tspk" x="89" y="622"/><use href="#teye" x="120" y="622"/><use href="#tmute" x="150" y="622"/>
<g transform="translate(26,677)" style="stroke-width:1.500"><path d="M-6 6A2.300 2.300 0 1 1-2 6V-4L6-6V4"/><circle cx="4" cy="4" r="2.300"/></g><use href="#tlock" x="59" y="677"/><use href="#tspk" x="89" y="677"/><use href="#tmute" x="120" y="677"/>
</g>
<text x="35" y="526" style="font-size:10px;fill:#a9adb1">4</text><text x="35" y="557" style="font-size:10px;fill:#a9adb1">3</text><text x="35" y="587" style="font-size:10px;fill:#a9adb1">2</text><text x="35" y="626" style="font-size:10px;fill:#a9adb1">1</text><text x="35" y="681" style="font-size:10px;fill:#a9adb1">1</text>
<text x="23" y="646" textLength="31" style="font-size:10px;fill:#6d7176">Video 1</text>
</g>

<!-- clips -->
<g clip-path="url(#tlc)">
<rect x="181" y="484" width="96" height="21" rx="4" fill="#a68236"/>
<text x="207" y="497" textLength="60" style="font-size:11px;fill:#e6d9b8">Sunny Days</text>
<rect x="189" y="486" width="13" height="13" rx="2" fill="#e9e2cf"/>
<rect x="181" y="509" width="96" height="27" rx="4" fill="#b89a46"/>
<rect x="189" y="516" width="14" height="14" rx="2" fill="#efe9d8"/><path d="M196 519 197.500 522 200.500 523 197.500 524 196 527 194.500 524 191.500 523 194.500 522Z" fill="#6a5520"/>
<text x="208" y="526" textLength="37" style="fill:#f0e8d2">Heart 2</text>

<rect x="164" y="540" width="870" height="27" rx="5" fill="#219ec2"/>
<rect x="172" y="546" width="13" height="14" rx="2" fill="#d4e6ec"/><text x="174.500" y="557.500" style="font-family:'Liberation Serif',serif;font-weight:bold;fill:#1d4f5e">T</text>
<text x="191" y="557" textLength="293" style="fill:#eff8fb">Clip_Selena Gomez shared her New winter makeup routine</text>
<rect x="164" y="571" width="870" height="26.500" rx="5" fill="#219ec2"/>
<rect x="172" y="576.500" width="13" height="14" rx="2" fill="#d4e6ec"/><text x="174.500" y="588" style="font-family:'Liberation Serif',serif;font-weight:bold;fill:#1d4f5e">T</text>
<text x="191" y="587.500" textLength="342" style="fill:#eff8fb">Translate_Clip_Selena Gomez shared her New winter makeup routine</text>

<rect x="165" y="602" width="870" height="61" rx="5" fill="#143d36" stroke="#d8dbdc" stroke-width="1.500"/>
<g clip-path="url(#clipm)">
<g filter="url(#b1)">
<use href="#f1" x="166" y="603"/><use href="#f1" x="234.500" y="603"/><use href="#f1" x="303" y="603"/><use href="#f1" x="371.500" y="603"/><use href="#f1" x="440" y="603"/><use href="#f1" x="508.500" y="603"/><use href="#f1" x="575" y="603"/>
<use href="#f2" x="643" y="603"/><use href="#f2" x="712" y="603"/><use href="#f2" x="780.500" y="603"/><use href="#f2" x="849" y="603"/><use href="#f2" x="919" y="603"/><use href="#f2" x="988" y="603"/>
</g>
<rect x="166" y="640" width="870" height="7" fill="#0f3f37"/>
<rect x="166" y="647" width="870" height="2.500" fill="#65c8ab"/>
<rect x="166" y="649.500" width="870" height="13.500" fill="#123b33"/>
<g transform="translate(167,649)"><use href="#wave"/><use href="#wave" x="120"/><use href="#wave" x="240"/><use href="#wave" x="360"/><use href="#wave" x="480"/><use href="#wave" x="600"/><use href="#wave" x="720"/><use href="#wave" x="840"/></g>
</g>
<rect x="172" y="608" width="13" height="15" rx="2" fill="#e7e8e8"/><path d="M175.500 611 182.500 615.500 175.500 620Z" fill="#33363a"/>
<text x="191" y="620" textLength="268" style="fill:#f4f5f5">Selena Gomez shared her New winter makeup routine</text>
<rect x="466" y="609" width="16" height="13" rx="4" fill="#f6f6f6"/>
<text x="468.500" y="619" style="font-size:9px;font-style:italic;font-weight:bold;fill:#161616">HD</text>
</g>
<rect x="1020" y="495" width="11" height="186" fill="#16191e"/><rect x="1021" y="533" width="9" height="62" rx="4" fill="#4b5056"/>
<rect x="164" y="493" width="867" height="2" fill="#c4575e"/>

<!-- playhead -->
<rect x="244.500" y="464" width="1.600" height="229" fill="#ee6169"/>
<path d="M240 457H251V465L245.500 469 240 465Z" fill="#ee6169"/>
<rect x="235" y="522" width="21" height="33" rx="10.500" fill="#f0666d"/>
<g fill="none" stroke="#fbe1e2" stroke-width="1.100"><path d="M242 530 249 541M249 530 242 541"/><circle cx="241" cy="544" r="2.500"/><circle cx="250" cy="544" r="2.500"/></g>

<!-- annotations -->
<path d="M1010 188 1083 52" stroke="#56d8b9" stroke-width="3.800" stroke-linecap="round" fill="none"/>
<path d="M1092 36 1092.500 54 1072.500 49Z" fill="#56d8b9"/>
<rect x="1116.500" y="43.500" width="61" height="32" fill="none" stroke="#5ad6b8" stroke-width="3.500"/>
<rect x="1040" y="252" width="247" height="376" fill="none" stroke="#5ad6b8" stroke-width="3.800"/>
</svg>
</body></html>
